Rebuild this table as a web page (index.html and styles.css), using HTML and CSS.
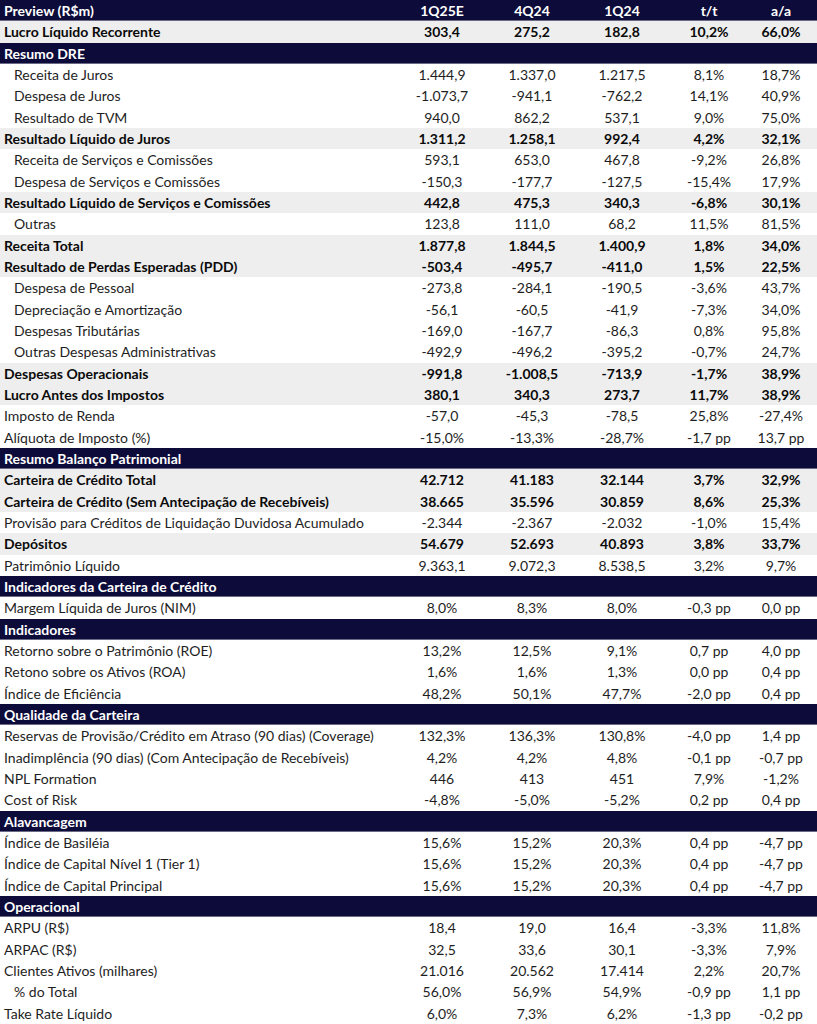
FILE: index.html
```html
<!DOCTYPE html>
<html lang="pt-BR">
<head>
<meta charset="utf-8">
<title>Preview (R$m)</title>
<link rel="stylesheet" href="styles.css">
</head>
<body>
<div class="sheet">
  <div class="row head"><span class="lbl">Preview (R$m)</span><span>1Q25E</span><span>4Q24</span><span>1Q24</span><span>t/t</span><span>a/a</span></div>
  <div class="row bold"><span class="lbl">Lucro Líquido Recorrente</span><span>303,4</span><span>275,2</span><span>182,8</span><span>10,2%</span><span>66,0%</span></div>
  <div class="row head"><span class="lbl">Resumo DRE</span></div>
  <div class="row sub"><span class="lbl">Receita de Juros</span><span>1.444,9</span><span>1.337,0</span><span>1.217,5</span><span>8,1%</span><span>18,7%</span></div>
  <div class="row sub"><span class="lbl">Despesa de Juros</span><span>-1.073,7</span><span>-941,1</span><span>-762,2</span><span>14,1%</span><span>40,9%</span></div>
  <div class="row sub"><span class="lbl">Resultado de TVM</span><span>940,0</span><span>862,2</span><span>537,1</span><span>9,0%</span><span>75,0%</span></div>
  <div class="row bold"><span class="lbl">Resultado Líquido de Juros</span><span>1.311,2</span><span>1.258,1</span><span>992,4</span><span>4,2%</span><span>32,1%</span></div>
  <div class="row sub"><span class="lbl">Receita de Serviços e Comissões</span><span>593,1</span><span>653,0</span><span>467,8</span><span>-9,2%</span><span>26,8%</span></div>
  <div class="row sub"><span class="lbl">Despesa de Serviços e Comissões</span><span>-150,3</span><span>-177,7</span><span>-127,5</span><span>-15,4%</span><span>17,9%</span></div>
  <div class="row bold"><span class="lbl">Resultado Líquido de Serviços e Comissões</span><span>442,8</span><span>475,3</span><span>340,3</span><span>-6,8%</span><span>30,1%</span></div>
  <div class="row sub"><span class="lbl">Outras</span><span>123,8</span><span>111,0</span><span>68,2</span><span>11,5%</span><span>81,5%</span></div>
  <div class="row bold"><span class="lbl">Receita Total</span><span>1.877,8</span><span>1.844,5</span><span>1.400,9</span><span>1,8%</span><span>34,0%</span></div>
  <div class="row bold"><span class="lbl">Resultado de Perdas Esperadas (PDD)</span><span>-503,4</span><span>-495,7</span><span>-411,0</span><span>1,5%</span><span>22,5%</span></div>
  <div class="row sub"><span class="lbl">Despesa de Pessoal</span><span>-273,8</span><span>-284,1</span><span>-190,5</span><span>-3,6%</span><span>43,7%</span></div>
  <div class="row sub"><span class="lbl">Depreciação e Amortização</span><span>-56,1</span><span>-60,5</span><span>-41,9</span><span>-7,3%</span><span>34,0%</span></div>
  <div class="row sub"><span class="lbl">Despesas Tributárias</span><span>-169,0</span><span>-167,7</span><span>-86,3</span><span>0,8%</span><span>95,8%</span></div>
  <div class="row sub"><span class="lbl">Outras Despesas Administrativas</span><span>-492,9</span><span>-496,2</span><span>-395,2</span><span>-0,7%</span><span>24,7%</span></div>
  <div class="row bold"><span class="lbl">Despesas Operacionais</span><span>-991,8</span><span>-1.008,5</span><span>-713,9</span><span>-1,7%</span><span>38,9%</span></div>
  <div class="row bold"><span class="lbl">Lucro Antes dos Impostos</span><span>380,1</span><span>340,3</span><span>273,7</span><span>11,7%</span><span>38,9%</span></div>
  <div class="row"><span class="lbl">Imposto de Renda</span><span>-57,0</span><span>-45,3</span><span>-78,5</span><span>25,8%</span><span>-27,4%</span></div>
  <div class="row"><span class="lbl">Alíquota de Imposto (%)</span><span>-15,0%</span><span>-13,3%</span><span>-28,7%</span><span>-1,7 pp</span><span>13,7 pp</span></div>
  <div class="row head"><span class="lbl">Resumo Balanço Patrimonial</span></div>
  <div class="row bold"><span class="lbl">Carteira de Crédito Total</span><span>42.712</span><span>41.183</span><span>32.144</span><span>3,7%</span><span>32,9%</span></div>
  <div class="row bold"><span class="lbl">Carteira de Crédito (Sem Antecipação de Recebíveis)</span><span>38.665</span><span>35.596</span><span>30.859</span><span>8,6%</span><span>25,3%</span></div>
  <div class="row"><span class="lbl">Provisão para Créditos de Liquidação Duvidosa Acumulado</span><span>-2.344</span><span>-2.367</span><span>-2.032</span><span>-1,0%</span><span>15,4%</span></div>
  <div class="row bold"><span class="lbl">Depósitos</span><span>54.679</span><span>52.693</span><span>40.893</span><span>3,8%</span><span>33,7%</span></div>
  <div class="row"><span class="lbl">Patrimônio Líquido</span><span>9.363,1</span><span>9.072,3</span><span>8.538,5</span><span>3,2%</span><span>9,7%</span></div>
  <div class="row head"><span class="lbl">Indicadores da Carteira de Crédito</span></div>
  <div class="row"><span class="lbl">Margem Líquida de Juros (NIM)</span><span>8,0%</span><span>8,3%</span><span>8,0%</span><span>-0,3 pp</span><span>0,0 pp</span></div>
  <div class="row head"><span class="lbl">Indicadores</span></div>
  <div class="row"><span class="lbl">Retorno sobre o Patrimônio (ROE)</span><span>13,2%</span><span>12,5%</span><span>9,1%</span><span>0,7 pp</span><span>4,0 pp</span></div>
  <div class="row"><span class="lbl">Retono sobre os Ativos (ROA)</span><span>1,6%</span><span>1,6%</span><span>1,3%</span><span>0,0 pp</span><span>0,4 pp</span></div>
  <div class="row"><span class="lbl">Índice de Eficiência</span><span>48,2%</span><span>50,1%</span><span>47,7%</span><span>-2,0 pp</span><span>0,4 pp</span></div>
  <div class="row head"><span class="lbl">Qualidade da Carteira</span></div>
  <div class="row"><span class="lbl">Reservas de Provisão/Crédito em Atraso (90 dias) (Coverage)</span><span>132,3%</span><span>136,3%</span><span>130,8%</span><span>-4,0 pp</span><span>1,4 pp</span></div>
  <div class="row"><span class="lbl">Inadimplência (90 dias) (Com Antecipação de Recebíveis)</span><span>4,2%</span><span>4,2%</span><span>4,8%</span><span>-0,1 pp</span><span>-0,7 pp</span></div>
  <div class="row"><span class="lbl">NPL Formation</span><span>446</span><span>413</span><span>451</span><span>7,9%</span><span>-1,2%</span></div>
  <div class="row"><span class="lbl">Cost of Risk</span><span>-4,8%</span><span>-5,0%</span><span>-5,2%</span><span>0,2 pp</span><span>0,4 pp</span></div>
  <div class="row head"><span class="lbl">Alavancagem</span></div>
  <div class="row"><span class="lbl">Índice de Basiléia</span><span>15,6%</span><span>15,2%</span><span>20,3%</span><span>0,4 pp</span><span>-4,7 pp</span></div>
  <div class="row"><span class="lbl">Índice de Capital Nível 1 (Tier 1)</span><span>15,6%</span><span>15,2%</span><span>20,3%</span><span>0,4 pp</span><span>-4,7 pp</span></div>
  <div class="row"><span class="lbl">Índice de Capital Principal</span><span>15,6%</span><span>15,2%</span><span>20,3%</span><span>0,4 pp</span><span>-4,7 pp</span></div>
  <div class="row head"><span class="lbl">Operacional</span></div>
  <div class="row"><span class="lbl">ARPU (R$)</span><span>18,4</span><span>19,0</span><span>16,4</span><span>-3,3%</span><span>11,8%</span></div>
  <div class="row"><span class="lbl">ARPAC (R$)</span><span>32,5</span><span>33,6</span><span>30,1</span><span>-3,3%</span><span>7,9%</span></div>
  <div class="row"><span class="lbl">Clientes Ativos (milhares)</span><span>21.016</span><span>20.562</span><span>17.414</span><span>2,2%</span><span>20,7%</span></div>
  <div class="row sub"><span class="lbl">% do Total</span><span>56,0%</span><span>56,9%</span><span>54,9%</span><span>-0,9 pp</span><span>1,1 pp</span></div>
  <div class="row"><span class="lbl">Take Rate Líquido</span><span>6,0%</span><span>7,3%</span><span>6,2%</span><span>-1,3 pp</span><span>-0,2 pp</span></div>
</div>
</body>
</html>
```

FILE: styles.css
```css
html, body {
  margin: 0;
  padding: 0;
  background: #ffffff;
}

.sheet {
  width: 817px;
  height: 1024px;
  display: grid;
  grid-template-rows: repeat(48, 1fr);
  font-family: Lato, "Open Sans", sans-serif;
  font-size: 14px;
  color: #1e1e1e;
}

.row {
  display: grid;
  grid-template-columns: 397px 90px 90px 90px 84px 60px 6px;
  align-items: center;
  white-space: nowrap;
}

.row > span {
  text-align: center;
}

.row > .lbl {
  text-align: left;
  padding-left: 4px;
}

.row.sub > .lbl {
  padding-left: 14px;
}

.row.bold {
  background: #eeeeee;
  font-weight: 700;
  color: #0a0a0a;
}

.row.head {
  background: #0c0b3a;
  color: #ffffff;
  font-weight: 700;
  box-shadow: inset 0 -1px 0 #6a6a86;
}
```
